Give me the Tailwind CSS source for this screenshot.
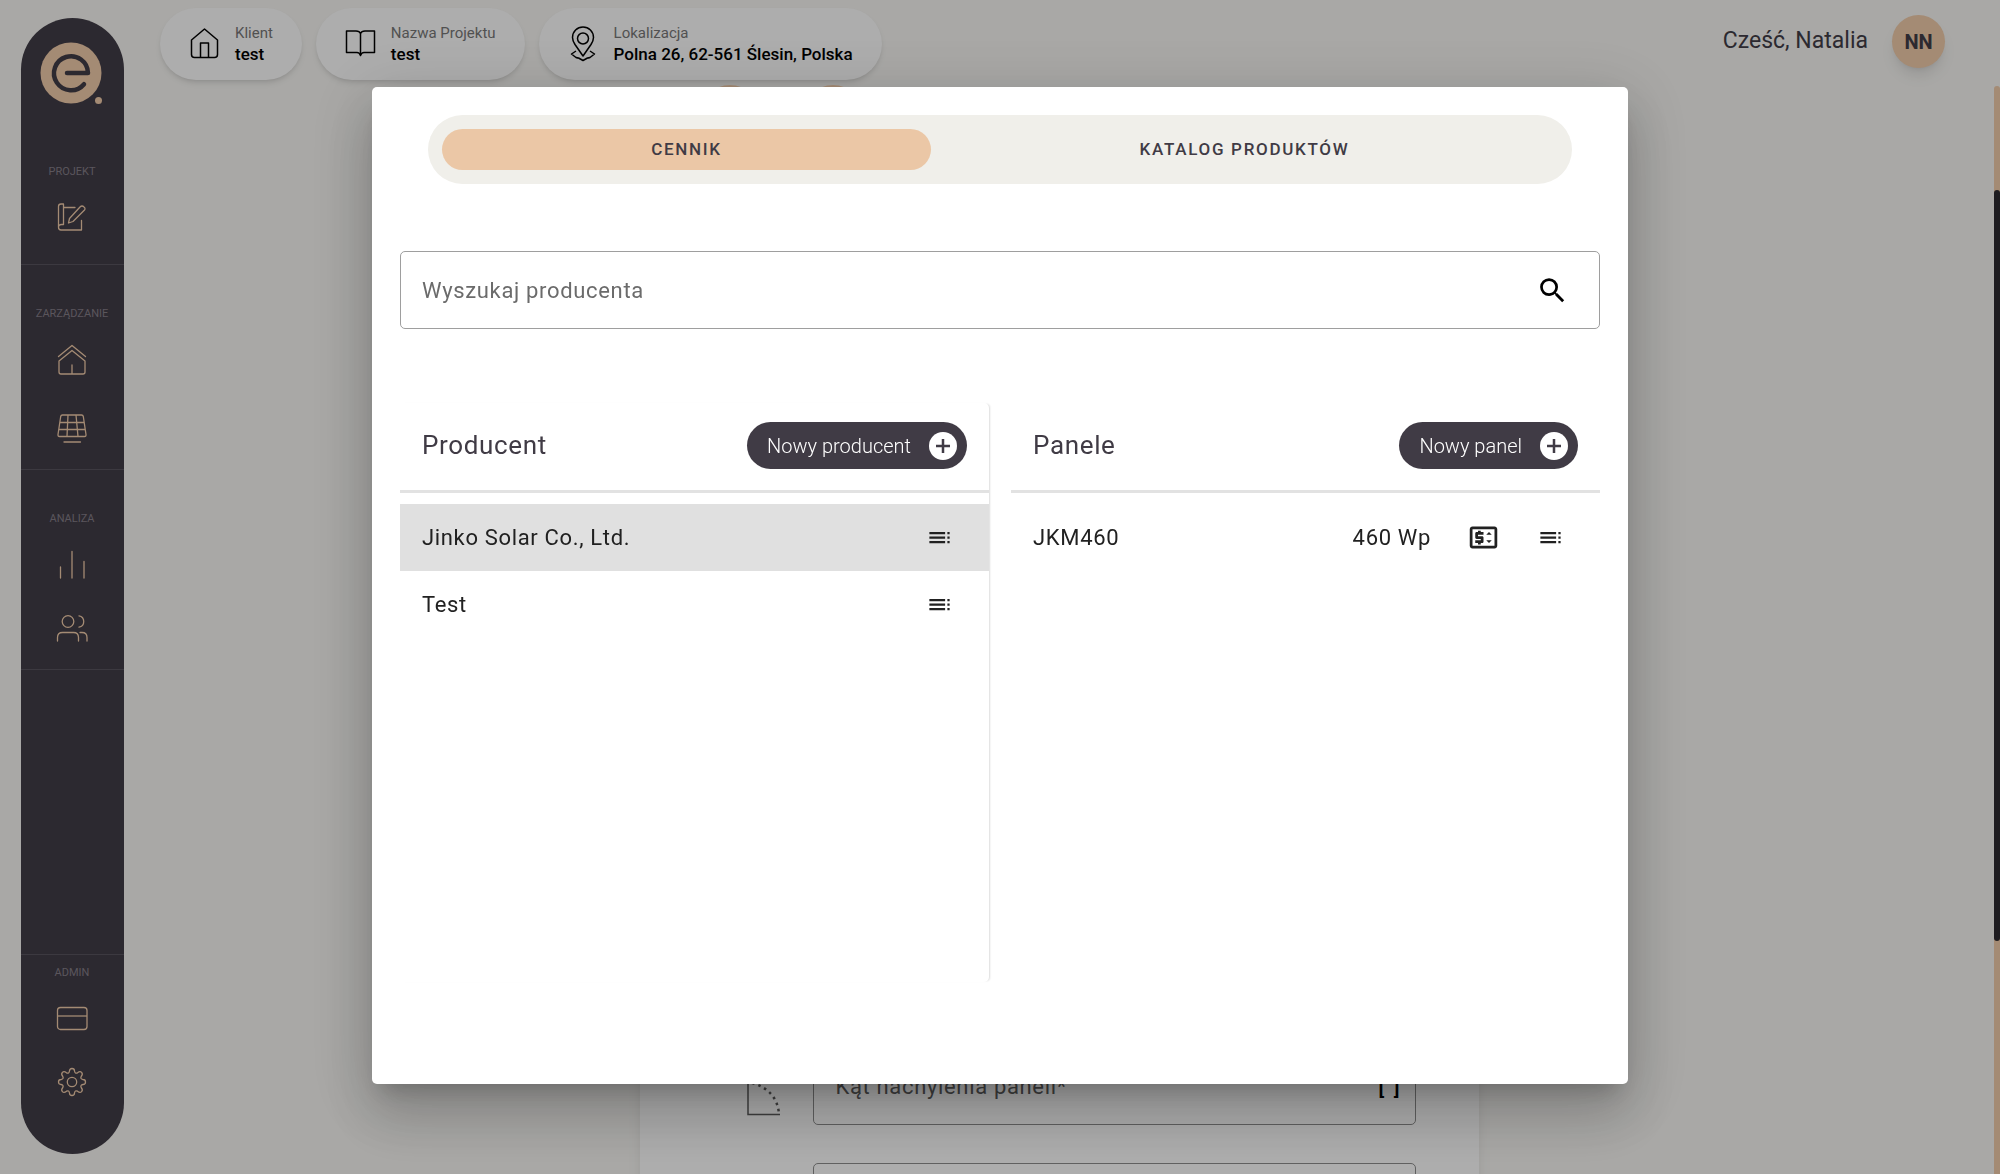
<!DOCTYPE html>
<html lang="pl">
<head>
<meta charset="utf-8">
<meta name="viewport" content="width=device-width, initial-scale=1">
<title>Cennik</title>
<script src="https://cdn.jsdelivr.net/npm/@tailwindcss/browser@4"></script>
</head>
<body class="h-screen overflow-hidden bg-[#f2f1ee] font-[Roboto,sans-serif] text-[#212121]">

<div class="flex h-full overflow-hidden">
  <!-- Navigation -->
  <aside class="mt-[18px] mb-5 ml-[21px] flex w-[103px] shrink-0 flex-col overflow-hidden rounded-full bg-[#403b45] text-center text-[11px] leading-4 text-[#827b85]">
    <a href="#" aria-label="Strona główna" class="mt-[23px] flex justify-center pr-px">
      <svg width="64" height="64" viewBox="0 0 64 64" fill="none">
        <circle cx="31" cy="32" r="30.500" fill="#ebc7a6"/>
        <circle cx="58.500" cy="59.500" r="3.500" fill="#ebc7a6"/>
        <path d="M27 32H48A17 17 0 1 0 44 43.200" stroke="#403b45" stroke-width="4.500" stroke-linecap="round" stroke-linejoin="round"/>
      </svg>
    </a>
    <nav class="flex grow flex-col">
      <section class="flex flex-col items-center border-b border-[#57525c] pt-[59px] pr-px pb-[31px]">
        <h2>PROJEKT</h2>
        <a href="#" aria-label="Projekt" class="mt-[21px]">
          <svg width="32" height="32" viewBox="0 0 32 32" fill="none" stroke="#ebc7a6" stroke-width="1.300" stroke-linecap="round" stroke-linejoin="round"><path d="M2.500 26V5.500Q2.500 3 5 3H7.500V23.500H5.500Q2.500 23.500 2.500 26.200Q2.500 29 5 29H25.500V19.500M7.500 6.500H19M12.500 22L13.500 17.500L24 6Q26 4 28 6Q30 7.500 28 9.500L17 20.500Z"/></svg>
        </a>
      </section>
      <section class="flex flex-col items-center border-b border-[#57525c] pt-[41px] pr-px pb-6">
        <h2>ZARZĄDZANIE</h2>
        <a href="#" aria-label="Domy" class="mt-[22px]">
          <svg width="32" height="32" viewBox="0 0 32 32" fill="none" stroke="#ebc7a6" stroke-width="1.300" stroke-linecap="round" stroke-linejoin="round"><path d="M2.500 12.500L16 1.500L29.500 12.500M3 17L16 6.500L29 17V28Q29 30 27 30H5Q3 30 3 28ZM16 21V30"/></svg>
        </a>
        <a href="#" aria-label="Panele" class="mt-[37px]">
          <svg width="32" height="32" viewBox="0 0 32 32" fill="none" stroke="#ebc7a6" stroke-width="1.300" stroke-linecap="round" stroke-linejoin="round"><path d="M6.500 2H25.500Q27 2 27.300 3.500L30 21.500Q30.200 23.500 28.500 23.500H3.500Q1.800 23.500 2 21.500L4.700 3.500Q5 2 6.500 2ZM4 9.500H28M3 16.500H29M12 2L11 23.500M20 2L22 23.500M8 29H24.500"/></svg>
        </a>
      </section>
      <section class="flex flex-col items-center border-b border-[#57525c] pt-[41px] pr-px pb-6">
        <h2>ANALIZA</h2>
        <a href="#" aria-label="Statystyki" class="mt-[22px]">
          <svg width="32" height="32" viewBox="0 0 32 32" fill="none" stroke="#ebc7a6" stroke-width="1.300" stroke-linecap="round"><path d="M4.500 18V29M16 2.500V29M28 12.500V29"/></svg>
        </a>
        <a href="#" aria-label="Klienci" class="mt-8">
          <svg width="32" height="32" viewBox="0 0 32 32" fill="none" stroke="#ebc7a6" stroke-width="1.300" stroke-linecap="round"><circle cx="12" cy="8.500" r="5.800"/><path d="M1.500 28V24.500Q1.500 19.500 6.500 19.500H17.500Q22.500 19.500 22.500 24.500V28M23 2.800A5.800 5.800 0 0 1 23 14.200M24 19.500H26Q31 19.500 31 24.500V28"/></svg>
        </a>
      </section>
      <section class="mt-auto flex flex-col items-center border-t border-[#57525c] pt-[10px] pr-px pb-14">
        <h2>ADMIN</h2>
        <a href="#" aria-label="Płatności" class="mt-[21px]">
          <svg width="32" height="32" viewBox="0 0 32 32" fill="none" stroke="#ebc7a6" stroke-width="1.300"><rect x="1.500" y="5.500" width="29.500" height="22" rx="3"/><path d="M1.500 14H31"/></svg>
        </a>
        <a href="#" aria-label="Ustawienia" class="mt-8">
          <svg width="32" height="32" viewBox="0 0 32 32" fill="none" stroke="#ebc7a6" stroke-width="1.300" stroke-linejoin="round"><circle cx="16" cy="16" r="4.700"/><path d="M13.500 5Q13.500 2.500 16 2.500Q18.500 2.500 18.500 5Q19 8 21.500 6.800Q24 4.800 25.600 6.400Q27.200 8 25.200 10.500Q24 13 27 13.500Q29.500 13.500 29.500 16Q29.500 18.500 27 18.500Q24 19 25.200 21.500Q27.200 24 25.600 25.600Q24 27.200 21.500 25.200Q19 24 18.500 27Q18.500 29.500 16 29.500Q13.500 29.500 13.500 27Q13 24 10.500 25.200Q8 27.200 6.400 25.600Q4.800 24 6.800 21.500Q8 19 5 18.500Q2.500 18.500 2.500 16Q2.500 13.500 5 13.500Q8 13 6.800 10.500Q4.800 8 6.400 6.400Q8 4.800 10.500 6.800Q13 8 13.500 5Z"/></svg>
        </a>
      </section>
    </nav>
  </aside>

  <!-- Project page -->
  <div class="flex min-w-0 grow flex-col pt-2">
    <header class="flex h-[72px] shrink-0 items-center justify-between pr-[49px] pl-9">
      <ul class="flex gap-[14px]">
        <li class="flex h-[72px] items-center gap-[15px] rounded-full bg-[#f8f8f8] px-[29px] shadow-md">
          <svg width="31" height="34" viewBox="0 0 31 34" fill="none" stroke="#000" stroke-width="1.500" stroke-linejoin="round"><path d="M2.500 13L15.500 2L28.500 13V27.500Q28.500 30.500 25.500 30.500H5.500Q2.500 30.500 2.500 27.500ZM11.500 30.500V16H19.500V30.500"/></svg>
          <div><p class="text-[15px] leading-5 text-[#757575]">Klient</p><p class="text-[17px] leading-[22px] font-medium text-black">test</p></div>
        </li>
        <li class="flex h-[72px] items-center gap-[15px] rounded-full bg-[#f8f8f8] px-[29px] shadow-md">
          <svg width="31" height="34" viewBox="0 0 31 34" fill="none" stroke="#000" stroke-width="1.500" stroke-linejoin="round"><path d="M15.500 28.500V6.500Q14.500 4 11 4H1.500V25.500H12Q14.500 25.500 15.500 28.500Q16.500 25.500 19 25.500H29.500V4H20Q16.500 4 15.500 6.500"/></svg>
          <div><p class="text-[15px] leading-5 text-[#757575]">Nazwa Projektu</p><p class="text-[17px] leading-[22px] font-medium text-black">test</p></div>
        </li>
        <li class="flex h-[72px] items-center gap-[15px] rounded-full bg-[#f8f8f8] px-[29px] shadow-md">
          <svg width="31" height="36" viewBox="0 0 31 36" fill="none" stroke="#000" stroke-width="1.500" stroke-linejoin="round"><path d="M15 30L7 18.500Q4.500 14.500 4.500 11.500A10.500 10.500 0 0 1 25.500 11.500Q25.500 14.500 23 18.500ZM8 25L3.500 28L8 31.500Q9.500 32 10.500 32L15 34.500L19.500 32Q20.500 32 22 31.500L26.500 28L22 25"/><circle cx="15" cy="12.500" r="5.500"/></svg>
          <div><p class="text-[15px] leading-5 text-[#757575]">Lokalizacja</p><p class="text-[17px] leading-[22px] font-medium text-black">Polna 26, 62-561 Ślesin, Polska</p></div>
        </li>
      </ul>
      <div class="flex items-center gap-6 pb-[5px] text-[23px] text-[#403b45]">
        <span>Cześć, Natalia</span>
        <button type="button" class="size-[53px] rounded-full bg-[#ebc7a6] text-xl font-bold shadow-lg">NN</button>
      </div>
    </header>

    <main class="mx-auto flex w-full max-w-[839px] grow flex-col">
      <div class="flex gap-[43px] pt-[5px] pl-[60px]">
        <span class="size-[60px] rounded-full bg-[#ebc7a6]"></span>
        <span class="size-[60px] rounded-full bg-[#ebc7a6]"></span>
      </div>
      <form class="mt-10 flex grow flex-col gap-[38px] bg-[#f8f8f8] pt-[863px] pr-[63px] pl-[107px] shadow-lg">
        <div class="flex shrink-0 items-center gap-[33px]">
          <svg class="shrink-0" width="33" height="58" viewBox="0 0 33 58" fill="none" stroke="#5a5a5a" stroke-width="1.500"><path d="M1 8V56.500H33"/><path d="M5 25Q30 32 32 56" stroke-width="2.500" stroke-dasharray="2.500 4"/></svg>
          <label class="flex h-[77px] grow items-center rounded-[5px] border border-[#8a8a8a] px-[22px] text-[22px] tracking-[0.03em] text-[#5c5c5c]">
            <input type="text" placeholder="Kąt nachylenia paneli*" class="min-w-0 grow bg-transparent outline-none placeholder:text-[#5c5c5c]">
            <span class="-mr-2 font-medium text-black">[°]</span>
          </label>
        </div>
        <input type="text" aria-label="Wymiar" class="ml-[66px] h-[77px] shrink-0 rounded-[5px] border border-[#8a8a8a]">
      </form>
    </main>
  </div>

  <div class="mt-[86px] w-1.5 shrink-0 rounded-t bg-[#ebc7a6] pt-[104px]">
    <div class="h-[751px] rounded-full bg-[#2c292f]"></div>
  </div>
</div>

<!-- Price list dialog -->
<div class="fixed inset-0 flex items-start justify-center bg-black/30 pt-[87px]">
  <div role="dialog" aria-label="Cennik" class="w-full max-w-[1256px] rounded-[5px] bg-white px-7 pt-7 pb-[102px] shadow-[0_15px_21px_-10px_rgba(0,0,0,0.2),0_33px_53px_4px_rgba(0,0,0,0.14),0_12px_64px_11px_rgba(0,0,0,0.12)]">
    <div role="tablist" class="mx-7 grid grid-cols-[489fr_627fr] rounded-full bg-[#f0efea] px-[14px] py-[14px] text-[17px] font-medium text-[#403b45]">
      <button role="tab" aria-selected="true" type="button" class="h-[41px] rounded-full bg-[#ebc7a6] tracking-widest">CENNIK</button>
      <button role="tab" aria-selected="false" type="button" class="h-[41px] rounded-full tracking-widest">KATALOG PRODUKTÓW</button>
    </div>

    <div class="mt-[67px] flex h-[78px] items-center rounded-[5px] border border-[#9e9e9e] pr-[30px] pl-[21px]">
      <input type="text" aria-label="Wyszukaj producenta" placeholder="Wyszukaj producenta" class="min-w-0 grow text-[22px] tracking-[0.03em] outline-none placeholder:text-[#6b6b6b]">
      <button type="button" aria-label="Szukaj">
        <svg width="33" height="33" viewBox="0 0 24 24" fill="#000"><path d="M15.500 14h-.79l-.28-.27A6.471 6.471 0 0 0 16 9.500 6.500 6.500 0 1 0 9.500 16c1.610 0 3.090-.59 4.230-1.570l.27.28v.79l5 4.990L20.490 19l-4.990-5zm-6 0C7.010 14 5 11.990 5 9.500S7.010 5 9.500 5 14 7.010 14 9.500 11.990 14 9.500 14z"/></svg>
      </button>
    </div>

    <div class="mt-[74px] grid grid-cols-2 gap-[22px]">
      <section class="h-[579px] rounded-[5px] shadow-[2px_0_2px_-1px_rgba(0,0,0,0.14)]">
        <header class="flex h-[90px] items-center justify-between border-b-3 border-[#e2e2e2] px-[22px] pb-0.5">
          <h2 class="text-[26px] tracking-wide text-[#403b45]">Producent</h2>
          <button type="button" class="flex h-[47px] items-center gap-[18px] rounded-full bg-[#403b45] pr-[10px] pl-5 text-xl font-light text-white">Nowy producent
            <svg width="28" height="28" viewBox="0 0 28 28"><circle cx="14" cy="14" r="14" fill="#fff"/><path d="M14 7V21M7 14H21" stroke="#403b45" stroke-width="2.500"/></svg>
          </button>
        </header>
        <ul class="mt-[11px] text-[22px] tracking-[0.03em]">
          <li class="flex h-[67px] items-center justify-between bg-[#e0e0e0] pr-9 pl-[22px]">
            <span>Jinko Solar Co., Ltd.</span>
            <button type="button" aria-label="Menu"><svg width="27" height="27" viewBox="0 0 24 24" fill="#212121"><path d="M3 9h14V7H3v2zm0 4h14v-2H3v2zm0 4h14v-2H3v2zm16 0h2v-2h-2v2zm0-10v2h2V7h-2zm0 6h2v-2h-2v2z"/></svg></button>
          </li>
          <li class="flex h-[67px] items-center justify-between pr-9 pl-[22px]">
            <span>Test</span>
            <button type="button" aria-label="Menu"><svg width="27" height="27" viewBox="0 0 24 24" fill="#212121"><path d="M3 9h14V7H3v2zm0 4h14v-2H3v2zm0 4h14v-2H3v2zm16 0h2v-2h-2v2zm0-10v2h2V7h-2zm0 6h2v-2h-2v2z"/></svg></button>
          </li>
        </ul>
      </section>
      <section>
        <header class="flex h-[90px] items-center justify-between border-b-3 border-[#e2e2e2] px-[22px] pb-0.5">
          <h2 class="text-[26px] tracking-wide text-[#403b45]">Panele</h2>
          <button type="button" class="flex h-[47px] items-center gap-[18px] rounded-full bg-[#403b45] pr-[10px] pl-5 text-xl font-light text-white">Nowy panel
            <svg width="28" height="28" viewBox="0 0 28 28"><circle cx="14" cy="14" r="14" fill="#fff"/><path d="M14 7V21M7 14H21" stroke="#403b45" stroke-width="2.500"/></svg>
          </button>
        </header>
        <ul class="mt-[11px] text-[22px] tracking-[0.03em]">
          <li class="flex h-[67px] items-center pr-9 pl-[22px]">
            <span class="grow">JKM460</span>
            <span>460 Wp</span>
            <button type="button" aria-label="Cena" class="mr-[37px] ml-9"><svg width="33" height="33" viewBox="0 0 24 24" fill="#212121"><path d="M20 4H4c-1.110 0-1.990.89-1.990 2L2 18c0 1.110.89 2 2 2h16c1.110 0 2-.89 2-2V6c0-1.110-.89-2-2-2zm0 14H4V6h16v12z"/><path d="M12 8h-2V7H8v1H7c-.55 0-1 .45-1 1v3c0 .55.45 1 1 1h3v1H6v2h2v1h2v-1h1c.55 0 1-.45 1-1v-3c0-.55-.45-1-1-1H8v-1h4V8zM16 8l-2 2h4zM14 14l2 2 2-2z"/></svg></button>
            <button type="button" aria-label="Menu"><svg width="27" height="27" viewBox="0 0 24 24" fill="#212121"><path d="M3 9h14V7H3v2zm0 4h14v-2H3v2zm0 4h14v-2H3v2zm16 0h2v-2h-2v2zm0-10v2h2V7h-2zm0 6h2v-2h-2v2z"/></svg></button>
          </li>
        </ul>
      </section>
    </div>
  </div>
</div>
</body>
</html>
